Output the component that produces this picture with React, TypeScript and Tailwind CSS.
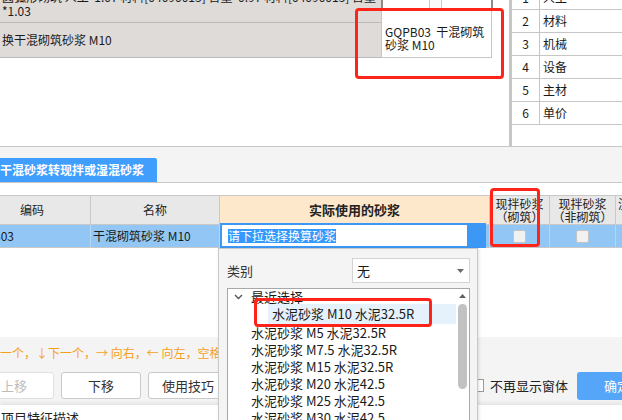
import React from "react";

function Check() {
  return <div className="h-[13px] w-[13px] rounded-[2px] border border-[#c4c4c4] bg-[#f1f1f1]" />;
}

export default function App() {
  const rightRows = [
    ["1", "人工"],
    ["2", "材料"],
    ["3", "机械"],
    ["4", "设备"],
    ["5", "主材"],
    ["6", "单价"],
  ];
  const list = [
    "水泥砂浆 M5 水泥32.5R",
    "水泥砂浆 M7.5 水泥32.5R",
    "水泥砂浆 M15 水泥32.5R",
    "水泥砂浆 M20 水泥42.5",
    "水泥砂浆 M25 水泥42.5",
    "水泥砂浆 M30 水泥42.5",
  ];
  return (
    <div className="relative h-[420px] w-[622px] overflow-hidden bg-white font-['Noto_Sans_CJK_SC',sans-serif] text-[#1a1a1a]">
      {/* Top area */}
      <div className="flex h-[147px] border-b border-[#c6c6c6] bg-white">
        <div className="flex w-[509px]">
          <div className="flex w-[381px] flex-col">
            <div className="h-[23px] overflow-hidden border-b border-[#b9b9b9] bg-[#dfdbd8] pl-[2px] text-[12px] leading-[14px]">
              <div className="mt-[-10px] whitespace-nowrap">圆弧形砌筑 人工*1.07 材料[04090013] 含量*0.97 材料[04090015] 含量</div>
              <div>*1.03</div>
            </div>
            <div className="flex h-[35px] items-center border-b border-[#b9b9b9] bg-[#dfdbd8] pl-[2px] text-[12px]">换干混砌筑砂浆 M10</div>
          </div>
          <div className="flex w-[112px] flex-col">
            <div className="flex h-[11px] border-x-2 border-b-2 border-[#8c8c8c] bg-white">
              <div className="ml-[46px] h-[9px] w-[13px] border-x border-[#c8c8c8] bg-[#fafafa]" />
            </div>
            <div className="h-[47px] w-[111px] border-x border-b border-[#c6c6c6] bg-white pl-[3px] pt-[14px] text-[12px] leading-[13px]">
              <div className="whitespace-nowrap">GQPB03&nbsp;&nbsp;干混砌筑</div>
              <div>砂浆 M10</div>
            </div>
          </div>
        </div>
        <div className="w-[3px] bg-[#c6c6c6]" />
        <div className="flex-1 overflow-hidden">
          <div className="mt-[-13px]">
            {rightRows.map(([n, t]) => (
              <div key={n} className="flex h-[23px] border-b border-[#c6c6c6] text-[12px]">
                <div className="flex w-[28px] items-center justify-center border-r border-[#c6c6c6]">{n}</div>
                <div className="flex items-center pl-[3px]">{t}</div>
              </div>
            ))}
          </div>
        </div>
      </div>

      {/* Tab */}
      <div className="flex h-[36px] items-end border-b border-[#c8c8c8] bg-[#f4f4f4]">
        <div className="flex h-[24px] w-[157px] items-center rounded-tr-[2px] bg-[#409eff] text-[12px] font-bold text-white">干混砂浆转现拌或湿混砂浆</div>
      </div>
      <div className="h-[12px] bg-white" />

      {/* Table header */}
      <div className="flex h-[30px] border-y border-[#c8c8c8] bg-[#e8e8e8] text-[12px] text-[#222]">
        <div className="ml-[-26px] flex w-[117px] shrink-0 items-center justify-center border-r border-[#c8c8c8]">编码</div>
        <div className="flex w-[129px] shrink-0 items-center justify-center border-r border-[#c8c8c8]">名称</div>
        <div className="flex w-[270px] shrink-0 items-center justify-center border-r border-[#c8c8c8] bg-[#fde8cc] text-[13px] font-bold">实际使用的砂浆</div>
        <div className="flex w-[60px] shrink-0 flex-col items-center justify-center border-r border-[#c8c8c8] leading-[13px]">
          <div>现拌砂浆</div>
          <div>（砌筑）</div>
        </div>
        <div className="flex w-[66px] shrink-0 flex-col items-center justify-center border-r border-[#c8c8c8] leading-[13px]">
          <div>现拌砂浆</div>
          <div>（非砌筑）</div>
        </div>
        <div className="flex w-[60px] shrink-0 flex-col justify-center pl-[2px] leading-[13px]">
          <div>湿拌砂浆</div>
          <div>（砌筑）</div>
        </div>
      </div>

      {/* Table row */}
      <div className="flex h-[23px] border-b border-[#c8c8c8] bg-[#92c7f5] text-[12px]">
        <div className="ml-[-26px] flex w-[117px] shrink-0 items-center overflow-hidden border-r border-[#b5d6f3]">
          <span className="ml-[-6px] whitespace-nowrap">GQPB03</span>
        </div>
        <div className="flex w-[129px] shrink-0 items-center border-r border-[#b5d6f3] pl-[2px]">干混砌筑砂浆 M10</div>
        <div className="mt-[-2px] flex h-[25px] w-[270px] shrink-0">
          <div className="flex w-[249px] items-center border-2 border-[#3d97f5] bg-white pl-[6px]">
            <span className="bg-[#3399ff] leading-[14px] text-white">请下拉选择换算砂浆</span>
          </div>
          <div className="w-[17px] bg-[#3d97f5]" />
          <div className="w-[4px] border-r border-[#b5d6f3]" />
        </div>
        <div className="flex w-[60px] shrink-0 items-center justify-center border-r border-[#b5d6f3]">
          <Check />
        </div>
        <div className="flex w-[66px] shrink-0 items-center justify-center border-r border-[#b5d6f3]">
          <Check />
        </div>
        <div className="w-[60px] shrink-0" />
      </div>

      <div className="h-[89px] bg-white" />

      {/* Footer */}
      <div className="h-[68px] bg-[#f4f4f4] pt-[9px]">
        <div className="whitespace-nowrap text-[12px] leading-[14px] text-[#f6a01a]">一个，↓下一个，→ 向右，← 向左，空格键勾选</div>
        <div className="mt-[12px] flex h-[27px] items-center text-[13px]">
          <div className="ml-[-26px] flex h-[27px] w-[80px] shrink-0 items-center justify-center rounded-[3px] border border-[#e0e0e0] bg-white text-[#bdbdbd]">上移</div>
          <div className="ml-[7px] flex h-[27px] w-[80px] shrink-0 items-center justify-center rounded-[3px] border border-[#c9c9c9] bg-white text-[#333]">下移</div>
          <div className="ml-[7px] flex h-[27px] w-[80px] shrink-0 items-center justify-center rounded-[3px] border border-[#c9c9c9] bg-white text-[#333]">使用技巧</div>
          <div className="flex-1" />
          <div className="h-[13px] w-[12px] shrink-0 border border-[#9a9a9a] bg-white" />
          <div className="ml-[6px] shrink-0 whitespace-nowrap text-[13px] text-[#222]">不再显示窗体</div>
          <div className="mr-[-35px] ml-[9px] flex h-[28px] w-[80px] shrink-0 items-center justify-center rounded-[3px] bg-[#55a6f8] text-white">确定</div>
        </div>
      </div>
      <div className="h-[20px] bg-white pl-[1px] pt-[5px] text-[13px] leading-[16px] text-[#222] shadow-[0_-2px_4px_rgba(0,0,0,0.08)]">项目特征描述</div>

      {/* Dropdown popup */}
      <div className="absolute left-[218px] top-[248px] h-[180px] w-[260px] border border-[#c9c9c9] bg-[#f4f4f4] shadow-[1px_1px_3px_rgba(0,0,0,0.12)]">
        <div className="flex items-center pl-[8px] pr-[7px] pt-[9px]">
          <span className="text-[13px] text-[#333]">类别</span>
          <div className="ml-auto flex h-[25px] w-[118px] items-center border border-[#d3d3d3] bg-white pl-[4px] text-[13px]">
            无
            <svg className="ml-auto mr-[5px]" width="7" height="4" viewBox="0 0 7 4">
              <path d="M0 0h7L3.5 4z" fill="#6b6b6b" />
            </svg>
          </div>
        </div>
        <div className="ml-[8px] mt-[5px] flex h-[140px] w-[243px] border border-[#a8a8a8] bg-white">
          <div className="flex flex-1 flex-col overflow-hidden text-[13px]">
            <div className="flex h-[16px] items-center pl-[6px]">
              <svg width="9" height="6" viewBox="0 0 9 6">
                <path d="M1 1l3.5 3.5L8 1" fill="none" stroke="#555" strokeWidth="1.4" />
              </svg>
              <span className="ml-[8px] leading-[16px]">最近选择</span>
            </div>
            <div className="relative ml-[40px] mt-[-1px] h-[20px] whitespace-nowrap bg-[#e5f1fb] pl-[4px] leading-[20px]">水泥砂浆 M10 水泥32.5R</div>
            {list.map((t) => (
              <div key={t} className="h-[17px] whitespace-nowrap pl-[23px] leading-[17px]">{t}</div>
            ))}
          </div>
          <div className="flex w-[13px] shrink-0 flex-col items-center">
            <svg className="mt-[5px]" width="7" height="4" viewBox="0 0 7 4">
              <path d="M0 4h7L3.5 0z" fill="#606060" />
            </svg>
            <div className="mt-[6px] h-[85px] w-[9px] rounded-full bg-[#c2c2c2]" />
          </div>
        </div>
      </div>

      {/* Red annotation boxes */}
      <div className="absolute left-[355px] top-[8px] h-[71px] w-[149px] rounded-[4px] border-[3px] border-[#ff2419]" />
      <div className="absolute left-[490px] top-[188px] h-[59px] w-[50px] rounded-[4px] border-[3px] border-[#ff2419]" />
      <div className="absolute left-[254px] top-[298px] h-[29px] w-[178px] rounded-[4px] border-[3px] border-[#ff2419]" />
    </div>
  );
}
